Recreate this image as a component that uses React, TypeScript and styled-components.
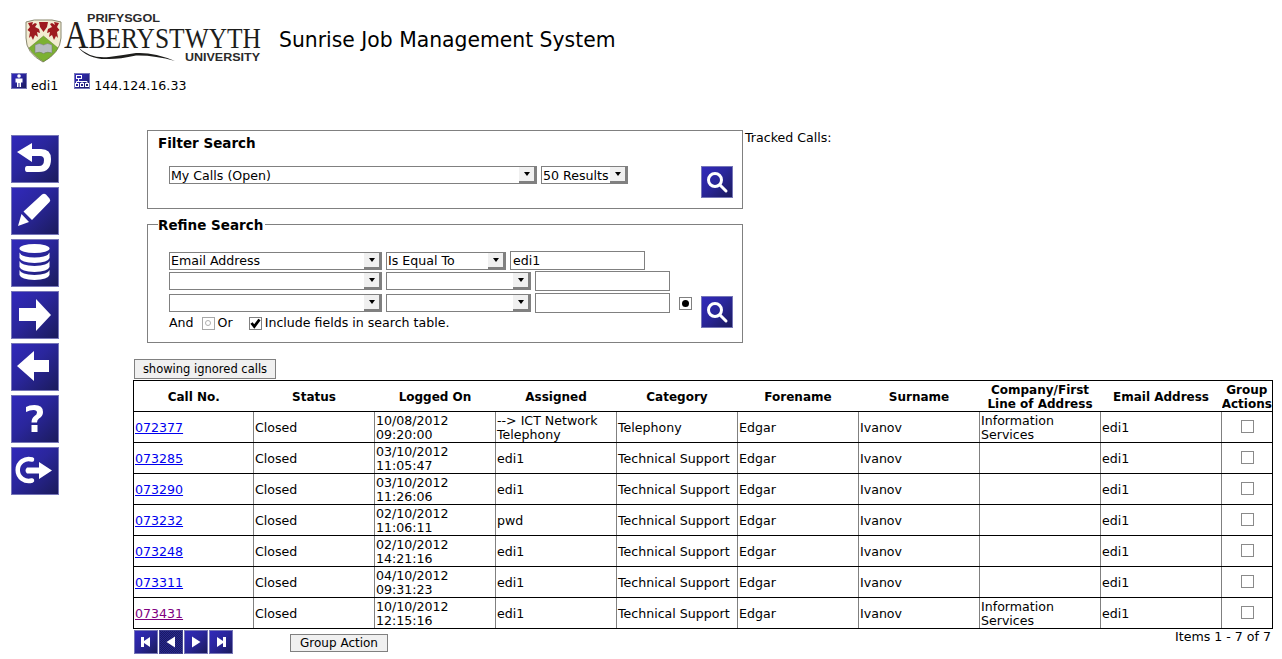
import React from "react";
import styled, { createGlobalStyle, css } from "styled-components";

const Global = createGlobalStyle`
  html, body { margin: 0; padding: 0; background: #fff; }
  body { font-family: "DejaVu Sans", Verdana, sans-serif; font-size: 12.6px; color: #000; overflow: hidden; }
`;

const Page = styled.div`width: 1282px; height: 659px; overflow: hidden;`;
const Header = styled.header`display: flex; align-items: flex-start; height: 73px; padding-left: 24px;`;
const Title = styled.h1`margin: 28px 0 0 17px; font-size: 20.35px; line-height: 24px; font-weight: 400; white-space: nowrap;`;
const UserBar = styled.div`display: flex; height: 57px; padding-left: 11px; line-height: 16px;`;
const UserItem = styled.div`display: flex; align-items: flex-start; gap: 4px; margin-right: 16px;`;
const UserText = styled.span`margin-top: 5px;`;
const Body = styled.div`display: flex; align-items: flex-start;`;
const Sidebar = styled.nav`display: flex; flex-direction: column; gap: 4px; width: 122px; padding: 5px 0 0 11px; flex: none;`;
const Main = styled.main`width: 1139px; flex: none;`;
const TopArea = styled.div`display: flex; align-items: flex-start; margin-left: 14px;`;
const Forms = styled.div`width: 596px; flex: none;`;
const Tracked = styled.div`margin-left: 2px; line-height: 15px;`;

const iconButton = css`
  box-sizing: border-box; display: flex; align-items: center; justify-content: center; padding: 0;
  border: 1px solid #7676b8; background: linear-gradient(135deg, #3129bb 0%, #2a269c 45%, #1b1b5c 100%);
`;
const NavButton = styled.button`${iconButton} width: 48px; height: 48px;`;
const SearchButton = styled.button`${iconButton} width: 32px; height: 32px; flex: none;`;
const PageButton = styled.button<{ $hover?: boolean }>`
  ${iconButton} width: 24px; height: 24px; flex: none;
  ${(p) => p.$hover && css`
    background: repeating-conic-gradient(#28288e 0% 25%, #1a1a62 0% 50%) 0 0 / 2px 2px;
    border-color: #454590;
  `}
`;
const SmallIcon = styled.span`${iconButton} width: 16px; height: 16px; flex: none;`;

const FilterBox = styled.section`
  box-sizing: border-box; height: 79px; border: 1px solid #808080; padding: 4px 9px 0 10px;
`;
const BoxTitle = styled.h2`margin: 0; font-size: 13.5px; line-height: 17px; font-weight: 700;`;
const FilterRow = styled.div`display: flex; align-items: flex-start; gap: 4px; margin: 14px 0 0 11px;`;
const PushRight = styled.div`margin-left: auto;`;
const RefinePush = styled(PushRight)`margin-bottom: 3px;`;

const RefineBox = styled.fieldset`
  box-sizing: border-box; margin: 6px 0 0; padding: 17px 9px 0 10px; height: 128px;
  border: 1px solid #808080; min-width: 0;
`;
const RefineLegend = styled.legend`
  padding: 2px 2px 0 0; font-size: 13.5px; line-height: 17px; font-weight: 700;
`;
const RefineLayout = styled.div`display: flex; align-items: flex-end; margin-left: 11px;`;
const RefineFields = styled.div`width: 531px; flex: none;`;
const FieldRow = styled.div<{ $h: number }>`display: flex; align-items: flex-start; gap: 4px; height: ${(p) => p.$h}px;`;

const SelectBox = styled.div<{ $w: number }>`
  box-sizing: border-box; flex: none; width: ${(p) => p.$w}px; height: 18px; display: flex; align-items: stretch;
  border: 1px solid #808080; background: #fff; line-height: 17px; padding-left: 1px; white-space: nowrap; overflow: hidden;
`;
const RowSelect = styled(SelectBox)`margin-top: 1px; line-height: 15px;`;
const SelectText = styled.span`flex: 1; min-width: 0;`;
const Arrow = styled.span`
  flex: none; width: 17px; box-sizing: border-box; display: flex; align-items: center; justify-content: center;
  background: #f0f0f0; border-right: 2px solid #808080; border-bottom: 2px solid #808080;
  &::after { content: ""; border-left: 3.5px solid transparent; border-right: 3.5px solid transparent; border-top: 4px solid #000; }
`;
const TextInput = styled.div<{ $h: number }>`
  box-sizing: border-box; width: 135px; height: ${(p) => p.$h}px; flex: none; border: 1px solid #808080;
  padding-left: 2px; line-height: 17px;
`;
const RadioBox = styled.span`
  box-sizing: border-box; display: flex; align-items: center; justify-content: center; width: 13px; height: 13px; flex: none;
  border: 1px solid #808080; margin: 4px 0 0 5px;
`;
const RadioDot = styled.span<{ $off?: boolean }>`
  display: block; border-radius: 50%;
  ${(p) => p.$off ? css`border: 1px solid #b0b0b0; width: 4px; height: 4px;` : css`width: 7px; height: 7px; background: #000;`}
`;
const OptionRow = styled.div`display: flex; align-items: center; height: 16px; line-height: 16px;`;
const Gap = styled.span<{ $w: number }>`display: inline-block; width: ${(p) => p.$w}px; flex: none;`;
const CheckBox = styled.span`
  box-sizing: border-box; display: flex; align-items: center; justify-content: center; width: 13px; height: 13px; flex: none;
  border: 1px solid #808080; background: #fff;
`;
const OffRadio = styled(RadioBox)`margin: 0; border-color: #a8a8a8;`;

const SoftButton = styled.button`
  box-sizing: border-box; border: 1px solid #808080; background: #f0f0f0; padding: 0; font: inherit; color: #000;
`;
const IgnoredButton = styled(SoftButton)`display: block; width: 142px; height: 20px; margin: 16px 0 1px 1px; font-size: 11.5px; line-height: 18px;`;
const GroupButton = styled(SoftButton)`width: 98px; height: 18px; margin: 5px 0 0 57px; font-size: 12px; line-height: 16px;`;

const Table = styled.table`
  border-collapse: collapse; table-layout: fixed; width: 1139px; border: 1px solid #000;
`;
const Th = styled.th`
  padding: 2px 0 0; height: 28px; font-size: 12px; line-height: 14px; font-weight: 700; text-align: center;
  border-bottom: 1px solid #000; overflow: hidden; white-space: nowrap;
`;
const Td = styled.td<{ $center?: boolean }>`
  box-sizing: border-box; padding: 2px 0 0 1px; height: 31px; font-size: 12.6px; line-height: 14px; white-space: nowrap; vertical-align: middle;
  border-bottom: 1px solid #000; border-left: 1px solid #808080; overflow: hidden;
  &:first-child { border-left: none; }
  ${(p) => p.$center && css`text-align: center; padding: 0;`}
`;
const CallLink = styled.a<{ $visited?: boolean }>`color: ${(p) => (p.$visited ? "#800080" : "#0000ee")}; text-decoration: underline;`;
const RowCheck = styled.span`display: inline-block; box-sizing: border-box; width: 13px; height: 13px; border: 1px solid #8a8a8a; background: #fff; vertical-align: middle; margin-bottom: 1px;`;
const Footer = styled.div`display: flex; align-items: flex-start;`;
const Pager = styled.div`display: flex; gap: 1px; margin: 1px 0 0 1px;`;
const Items = styled.div`margin-left: auto; margin-right: 1px; line-height: 16px;`;
const LogoMark = styled.svg`flex: none; margin-top: 12px;`;

const W = "#fff";
const Back = () => (
  <svg width="40" height="40" viewBox="0 0 40 40">
    <path d="M2 13 L17 4 V10 H26 Q36 10 36 20 Q36 33 24 33 H12 Q10 33 10 30 Q10 27 12 27 H24 Q29 27 29 21 Q29 17 25 17 H17 V23 Z" fill={W} />
  </svg>
);
const Pencil = () => (
  <svg width="40" height="40" viewBox="0 0 40 40">
    <path d="M27 3.500 Q29 2 31 3.500 L34.500 7.500 Q36 9.500 34.500 11 L17 29 L8.500 20.500 Z" fill={W} />
    <path d="M6.500 23 L14 31 L3 35 Z" fill={W} />
  </svg>
);
const Db = () => (
  <svg width="40" height="40" viewBox="0 0 40 40">
    <ellipse cx="19.500" cy="5.500" rx="15" ry="4.500" fill={W} />
    <path d="M4.500 9.500 Q6 14 19.500 14.500 Q33 14 34.500 9.500 L34.500 15 Q33 19.500 19.500 20 Q6 19.500 4.500 15 Z" fill={W} />
    <path d="M4.500 18 Q6 22.500 19.500 23 Q33 22.500 34.500 18 L34.500 24 Q33 28.500 19.500 29 Q6 28.500 4.500 24 Z" fill={W} />
    <path d="M4.500 27 Q6 31.500 19.500 32 Q33 31.500 34.500 27 L34.500 32 Q33 36.500 19.500 37 Q6 36.500 4.500 32 Z" fill={W} />
  </svg>
);
const RightArrow = () => (
  <svg width="40" height="40" viewBox="0 0 40 40"><path d="M4 13 H21 V4 L36 20 L21 36 V26 H4 Z" fill={W} /></svg>
);
const LeftArrow = () => (
  <svg width="40" height="40" viewBox="0 0 40 40"><path d="M34 13 H19 V4 L2 19 L19 34 V25 H34 Z" fill={W} /></svg>
);
const Help = () => (
  <svg width="40" height="40" viewBox="0 0 40 40">
    <path d="M11 8 Q14 6 19.500 6 Q28 6 28 13 Q28 17 24 19.500 Q22 21 22 23.500 H16.500 Q16.500 19 19.500 17 Q22 15.500 22 13.500 Q22 11 18.500 11 Q15 11 11 13 Z" fill={W} />
    <rect x="16.500" y="26" width="6" height="7" fill={W} />
  </svg>
);
const LogOut = () => (
  <svg width="40" height="40" viewBox="0 0 40 40">
    <path d="M17 8.500 A11 11 0 1 0 17 29.500" fill="none" stroke={W} strokeWidth="4.500" strokeLinecap="round" />
    <path d="M12 16.500 H24 V11 L37 19.500 L24 28 V22.500 H12 Q9 19.500 12 16.500 Z" fill={W} />
  </svg>
);
const Magnifier = () => (
  <svg width="24" height="24" viewBox="0 0 24 24">
    <circle cx="10" cy="10" r="6.500" fill="none" stroke={W} strokeWidth="3" />
    <path d="M15 15 L21 21" stroke={W} strokeWidth="3" strokeLinecap="round" />
  </svg>
);
const Person = () => (
  <svg width="14" height="14" viewBox="0 0 14 14">
    <circle cx="7" cy="2" r="1.800" fill={W} />
    <path d="M3.500 4.500 H10.500 V8.500 H9 V13 H7.500 V9 H6.500 V13 H5 V8.500 H3.500 Z" fill={W} />
  </svg>
);
const Network = () => (
  <svg width="14" height="14" viewBox="0 0 14 14" fill="none" stroke={W}>
    <rect x="1.500" y="1.500" width="5" height="3" />
    <path d="M3.500 5 V7.500 M1.500 7.500 H12 M1.500 7.500 V9 M7 7.500 V9 M12 7.500 V9" />
    <rect x=".5" y="9.500" width="3" height="3" />
    <rect x="5.500" y="9.500" width="3" height="3" />
    <rect x="10.500" y="9.500" width="3" height="3" />
  </svg>
);
const Tri = ({ d }: { d: string }) => (
  <svg width="16" height="16" viewBox="0 0 16 16"><path d={d} fill={W} /></svg>
);
const Tick = () => (
  <svg width="11" height="11" viewBox="0 0 11 11"><path d="M1.500 5 L4.300 8.500 L9.500 1.500" fill="none" stroke="#000" strokeWidth="2.800" /></svg>
);

const griffin = "M4 11 L9 10 L8 13 L11 11 L13 12 L11 15 L15 17 L16 21 L13 20 L14 25 L11 23 L9 28 L7 24 L5 26 L6 20 L3.500 18 L6 15 Z";
const Logo = () => (
  <LogoMark width="238" height="52" viewBox="0 0 238 52">
    <path d="M2 10 Q10 7 19 8 Q28 7 37 10 L37 26 Q36 41 19 50 Q2 41 2 26 Z" fill="#f2ecd2" stroke="#8a8870" />
    <path d={griffin} fill="#9e1a1f" />
    <path d={griffin} fill="#9e1a1f" transform="matrix(-1 0 0 1 39 0)" />
    <path d="M15 10 H24 L23 15 L19.500 20 L16 15 Z" fill="#9e1a1f" />
    <path d="M19.500 24 L34 36 Q29 44 19.500 49.500 Q10 44 5 36 Z" fill="#7cb132" stroke="#5a7f2a" strokeWidth=".5" />
    <path d="M11 33 Q15.500 30 19.500 33 Q23.500 30 28 33 L28 41 Q23.500 39 19.500 41.500 Q15.500 39 11 41 Z" fill="#b7bcc0" stroke="#777" strokeWidth=".5" />
    <text x="63" y="10" fontFamily="Liberation Sans, sans-serif" fontWeight="700" fontSize="10.500" textLength="73" lengthAdjust="spacingAndGlyphs" fill="#2a2a2a">PRIFYSGOL</text>
    <text x="40" y="36" fontFamily="Liberation Serif, serif" fontSize="30" fill="#1d1d1b" textLength="197" lengthAdjust="spacingAndGlyphs"><tspan fontSize="40">A</tspan>BERYSTWYTH</text>
    <path d="M54 35 Q66 47 85 45 Q100 43 112 41 Q130 40 151 49 Q130 43 112 43.500 Q96 47 85 47 Q64 48 54 35 Z" fill="#1d1d1b" />
    <text x="161" y="49" fontFamily="Liberation Sans, sans-serif" fontWeight="700" fontSize="10.500" textLength="75" lengthAdjust="spacingAndGlyphs" fill="#2a2a2a">UNIVERSITY</text>
  </LogoMark>
);

const cols = [120, 121, 121, 121, 121, 121, 121, 121, 121, 51];
const TS = "Technical Support";
const IS = <>Information<br />Services</>;
const rows: { id: string; date: string; time: string; asg: React.ReactNode; cat: string; co?: React.ReactNode; v?: boolean }[] = [
  { id: "072377", date: "10/08/2012", time: "09:20:00", asg: <>--&gt; ICT Network<br />Telephony</>, cat: "Telephony", co: IS },
  { id: "073285", date: "03/10/2012", time: "11:05:47", asg: "edi1", cat: TS },
  { id: "073290", date: "03/10/2012", time: "11:26:06", asg: "edi1", cat: TS },
  { id: "073232", date: "02/10/2012", time: "11:06:11", asg: "pwd", cat: TS },
  { id: "073248", date: "02/10/2012", time: "14:21:16", asg: "edi1", cat: TS },
  { id: "073311", date: "04/10/2012", time: "09:31:23", asg: "edi1", cat: TS },
  { id: "073431", date: "10/10/2012", time: "12:15:16", asg: "edi1", cat: TS, co: IS, v: true },
];

export default function App() {
  return (
    <Page>
      <Global />
      <Header>
        <Logo />
        <Title>Sunrise Job Management System</Title>
      </Header>
      <UserBar>
        <UserItem><SmallIcon><Person /></SmallIcon><UserText>edi1</UserText></UserItem>
        <UserItem><SmallIcon><Network /></SmallIcon><UserText>144.124.16.33</UserText></UserItem>
      </UserBar>
      <Body>
        <Sidebar>
          <NavButton aria-label="Back"><Back /></NavButton>
          <NavButton aria-label="Edit"><Pencil /></NavButton>
          <NavButton aria-label="Database"><Db /></NavButton>
          <NavButton aria-label="Forward"><RightArrow /></NavButton>
          <NavButton aria-label="Previous"><LeftArrow /></NavButton>
          <NavButton aria-label="Help"><Help /></NavButton>
          <NavButton aria-label="Log out"><LogOut /></NavButton>
        </Sidebar>
        <Main>
          <TopArea>
            <Forms>
              <FilterBox>
                <BoxTitle>Filter Search</BoxTitle>
                <FilterRow>
                  <SelectBox $w={368}><SelectText>My Calls (Open)</SelectText><Arrow /></SelectBox>
                  <SelectBox $w={87}><SelectText>50 Results</SelectText><Arrow /></SelectBox>
                  <PushRight><SearchButton aria-label="Search"><Magnifier /></SearchButton></PushRight>
                </FilterRow>
              </FilterBox>
              <RefineBox>
                <RefineLegend>Refine Search</RefineLegend>
                <RefineLayout>
                  <RefineFields>
                    <FieldRow $h={20}>
                      <RowSelect $w={213}><SelectText>Email Address</SelectText><Arrow /></RowSelect>
                      <RowSelect $w={120}><SelectText>Is Equal To</SelectText><Arrow /></RowSelect>
                      <TextInput $h={19}>edi1</TextInput>
                    </FieldRow>
                    <FieldRow $h={22}>
                      <RowSelect $w={213}><SelectText /><Arrow /></RowSelect>
                      <RowSelect $w={145}><SelectText /><Arrow /></RowSelect>
                      <TextInput $h={20}></TextInput>
                    </FieldRow>
                    <FieldRow $h={22}>
                      <RowSelect $w={213}><SelectText /><Arrow /></RowSelect>
                      <RowSelect $w={145}><SelectText /><Arrow /></RowSelect>
                      <TextInput $h={20}></TextInput>
                      <RadioBox><RadioDot /></RadioBox>
                    </FieldRow>
                    <OptionRow>
                      And<Gap $w={8} /><OffRadio><RadioDot $off /></OffRadio><Gap $w={3} />Or<Gap $w={16} />
                      <CheckBox><Tick /></CheckBox><Gap $w={3} />Include fields in search table.
                    </OptionRow>
                  </RefineFields>
                  <RefinePush><SearchButton aria-label="Refine"><Magnifier /></SearchButton></RefinePush>
                </RefineLayout>
              </RefineBox>
            </Forms>
            <Tracked>Tracked Calls:</Tracked>
          </TopArea>
          <IgnoredButton>showing ignored calls</IgnoredButton>
          <Table>
            <colgroup>{cols.map((w, i) => <col key={i} style={{ width: w }} />)}</colgroup>
            <thead>
              <tr>
                <Th>Call No.</Th><Th>Status</Th><Th>Logged On</Th><Th>Assigned</Th><Th>Category</Th><Th>Forename</Th><Th>Surname</Th>
                <Th>Company/First<br />Line of Address</Th><Th>Email Address</Th><Th>Group<br />Actions</Th>
              </tr>
            </thead>
            <tbody>
              {rows.map((r) => (
                <tr key={r.id}>
                  <Td><CallLink href="#" $visited={r.v}>{r.id}</CallLink></Td>
                  <Td>Closed</Td>
                  <Td>{r.date}<br />{r.time}</Td>
                  <Td>{r.asg}</Td>
                  <Td>{r.cat}</Td>
                  <Td>Edgar</Td>
                  <Td>Ivanov</Td>
                  <Td>{r.co}</Td>
                  <Td>edi1</Td>
                  <Td $center><RowCheck /></Td>
                </tr>
              ))}
            </tbody>
          </Table>
          <Footer>
            <Pager>
              <PageButton aria-label="First"><Tri d="M3 3 H6 V7 L12 3 V13 L6 9 V13 H3 Z" /></PageButton>
              <PageButton aria-label="Previous page" $hover><Tri d="M12 2.500 V13.500 L3.500 8 Z" /></PageButton>
              <PageButton aria-label="Next page"><Tri d="M4 2.500 V13.500 L12.500 8 Z" /></PageButton>
              <PageButton aria-label="Last"><Tri d="M13 3 H10 V7 L4 3 V13 L10 9 V13 H13 Z" /></PageButton>
            </Pager>
            <GroupButton>Group Action</GroupButton>
            <Items>Items 1 - 7 of 7</Items>
          </Footer>
        </Main>
      </Body>
    </Page>
  );
}
